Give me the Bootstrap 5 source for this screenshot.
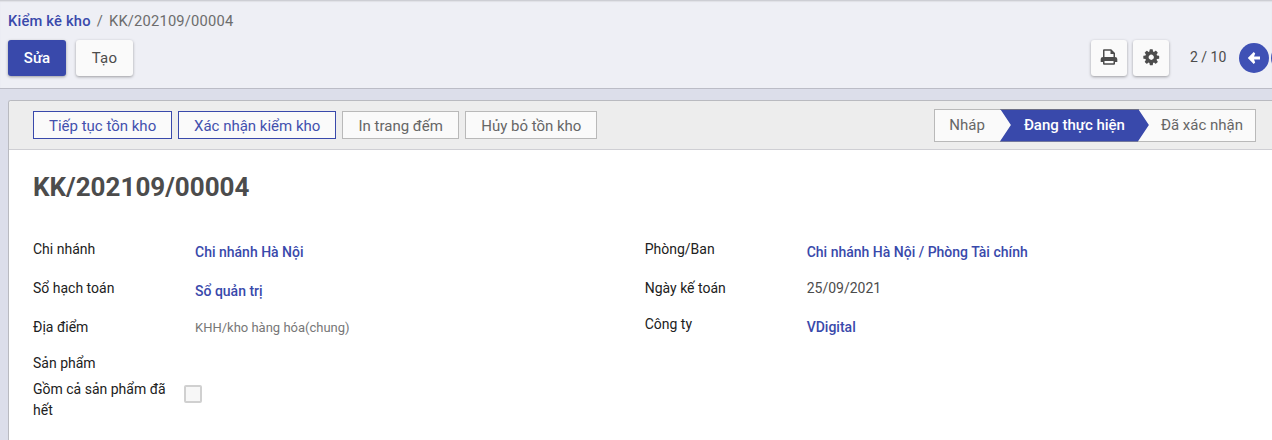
<!DOCTYPE html>
<html lang="vi">
<head>
<meta charset="utf-8">
<meta name="viewport" content="width=device-width, initial-scale=1">
<title>Kiểm kê kho</title>
<link href="https://cdn.jsdelivr.net/npm/bootstrap@5.3.0/dist/css/bootstrap.min.css" rel="stylesheet">
<style>
body{font-family:Roboto,"Noto Sans",sans-serif;font-size:14px;line-height:21px;color:#4c4c4c;background:#dcdeea;height:440px;overflow:hidden}
a{color:#3949ab;text-decoration:none;font-weight:500}
svg{display:block;fill:currentColor}
.topbar{height:89px;background:#eeeff5;border-top:1px solid #cdced4;border-bottom:1px solid #bbbcc6;padding:10px 0 0 8px;box-shadow:inset 0 1px 1px #dfe0e6}
.crumbs{font-size:14.7px;line-height:21px;letter-spacing:.2px;color:#6c6c6c}
.crumbs .sep{padding:0 6px}
.btn-act{--bs-btn-border-width:0;--bs-btn-border-radius:3px;height:36px;padding:0;font-size:15px;line-height:36px;color:#4c4c4c;background:#fafafa;box-shadow:0 1px 3px rgba(0,0,0,.35)}
.btn-act.main{background:#3949ab;color:#fff;font-weight:500;width:58px;letter-spacing:0}
.btn-text{width:57px;letter-spacing:.2px}
.btn-new{margin-left:10px}
.btn-sq{width:36px;padding-bottom:2px}
.gap-tool{gap:6px}
.pager{font-size:14px;letter-spacing:0;width:37px;white-space:nowrap;margin:0 6px 1px 15px}
.round{flex:none;width:30px;height:30px;border-radius:50%;background:#3f51b5;color:#fff}
.round.next{margin:0 -29px 0 -4px}
.sheet{margin:11px 0 0 8px;height:341px;border:1px solid #b9bac0;border-right:0;border-bottom:0;border-radius:3px 0 0 0;background:#fff;overflow:hidden}
.statusrow{height:49px;background:#ededed;border-bottom:1px solid #cfcfd4;padding:0 16px 0 24px}
.btn-flat{--bs-btn-border-radius:0;height:28px;padding:1px 15px 0;font-size:15px;line-height:27px;color:#666;background:#fafafa;border-color:#b9b9b9}
.btn-flat.blue{color:#4250ae;border-color:#3949ab}
.btn-flat.wide{width:158px;padding-left:14px;padding-right:14px}
.btn-flat.count{width:117px}
.steps{height:33px;background:#fafafa;border:1px solid #b9b9b9;font-size:15px;line-height:30px;color:#666}
.step-side{padding:0 15px 0 14.500px}
.step-last{padding:0 12px}
.step-now{height:33px;width:149px;text-align:center;margin:-1px 0;line-height:33px;background:#3949ab;color:#fff;font-weight:500;font-size:15px;border:1px solid #6d6f86;border-width:1px 0;line-height:31px;letter-spacing:-.02px;clip-path:polygon(0 0,calc(100% - 11px) 0,100% 50%,calc(100% - 11px) 100%,0 100%,11px 50%)}
.doc-title{font-size:26px;line-height:32px;font-weight:700;color:#4c4c4c;margin:21px 0 0 24px}
.fields{margin:36px 0 0 24px}
.fcol{width:611.7px}
.lbl{width:162px;color:#212121;padding-right:26px}
.dim{font-size:13px;color:#777}
.r39{height:39px}.r36{height:36px}.r26{height:26px}
.low{padding-top:3px}
.tick{width:18px;height:18px;margin:6px 0 0 -11px;border:2px solid #d0d0d0;border-radius:2px;background:#f7f7f7}
</style>
</head>
<body>
<header class="topbar">
  <nav class="crumbs d-flex"><a href="#">Kiểm kê kho</a><span class="sep">/</span><span>KK/202109/00004</span></nav>
  <div class="d-flex align-items-center mt-2">
    <button class="btn btn-act main">Sửa</button>
    <button class="btn btn-act btn-text btn-new">Tạo</button>
    <div class="d-flex align-items-center ms-auto gap-tool">
      <button class="btn btn-act btn-sq d-flex align-items-center justify-content-center" aria-label="In"><svg width="18" height="16" viewBox="0 0 18 16"><path fill-rule="evenodd" d="M3 8V1.300Q3 .3 4 .3h7.200L15 4v4q2.300 0 2.300 2v3H15v1.800q0 .9-1 .9H4q-1 0-1-.9V13H.7v-3Q.7 8 3 8zm1.500 0h9V5h-3V1.800h-6zm0 4v2.200h9V12z"/></svg></button>
      <button class="btn btn-act btn-sq d-flex align-items-center justify-content-center" aria-label="Tác vụ"><svg width="18.500" height="18.500" viewBox="0 0 1792 1792"><path d="M1152 896q0-106-75-181t-181-75-181 75-75 181 75 181 181 75 181-75 75-181zm512-109v222q0 12-8 23t-20 13l-185 28q-19 54-39 91 35 50 107 138 10 12 10 25t-9 23q-27 37-99 108t-94 71q-12 0-26-9l-138-108q-44 23-91 38-16 136-29 186-7 28-36 28h-222q-14 0-24.500-8.500t-11.500-21.500l-28-184q-49-16-90-37l-141 107q-10 9-25 9-14 0-25-11-126-114-165-168-7-10-7-23 0-12 8-23 15-21 51-66.500t54-70.500q-27-50-41-99l-183-27q-13-2-21-12.500t-8-23.500v-222q0-12 8-23t19-13l186-28q14-46 39-92-40-57-107-138-10-12-10-24 0-10 9-23 26-36 98.500-107.500t94.500-71.500q13 0 26 10l138 107q44-23 91-38 16-136 29-186 7-28 36-28h222q14 0 24.500 8.500t11.500 21.500l28 184q49 16 90 37l142-107q9-9 24-9 13 0 25 10 129 119 165 170 7 8 7 22 0 12-8 23-15 21-51 66.500t-54 70.500q26 50 41 98l183 28q13 2 21 12.500t8 23.500z"/></svg></button>
      <span class="pager">2 / 10</span>
      <span class="round d-flex align-items-center justify-content-center"><svg width="14" height="14" viewBox="0 0 14 14"><path d="M6.700 1l1.500 1.400-1.200 3.200h6v2.800h-6l1.200 3.200L6.700 13 .8 7z"/></svg></span>
      <span class="round next"></span>
    </div>
  </div>
</header>
<main class="sheet">
  <div class="statusrow d-flex align-items-center">
    <div class="d-flex gap-tool">
      <button class="btn btn-flat blue">Tiếp tục tồn kho</button>
      <button class="btn btn-flat blue wide">Xác nhận kiểm kho</button>
      <button class="btn btn-flat count">In trang đếm</button>
      <button class="btn btn-flat">Hủy bỏ tồn kho</button>
    </div>
    <div class="steps d-flex ms-auto">
      <span class="step-side">Nháp</span>
      <span class="step-now">Đang thực hiện</span>
      <span class="step-last">Đã xác nhận</span>
    </div>
  </div>
  <h1 class="doc-title">KK/202109/00004</h1>
  <div class="fields d-flex">
    <div class="fcol">
      <div class="d-flex r39"><div class="lbl">Chi nhánh</div><div class="low"><a href="#">Chi nhánh Hà Nội</a></div></div>
      <div class="d-flex r39"><div class="lbl">Sổ hạch toán</div><div class="low"><a href="#">Sổ quản trị</a></div></div>
      <div class="d-flex r36"><div class="lbl">Địa điểm</div><div class="dim">KHH/kho hàng hóa(chung)</div></div>
      <div class="d-flex r26"><div class="lbl">Sản phẩm</div></div>
      <div class="d-flex"><div class="lbl">Gồm cả sản phẩm đã hết</div><div class="tick"></div></div>
    </div>
    <div>
      <div class="d-flex r39"><div class="lbl">Phòng/Ban</div><div class="low"><a href="#">Chi nhánh Hà Nội / Phòng Tài chính</a></div></div>
      <div class="d-flex r36"><div class="lbl">Ngày kế toán</div><div>25/09/2021</div></div>
      <div class="d-flex r39"><div class="lbl">Công ty</div><div class="low"><a href="#">VDigital</a></div></div>
    </div>
  </div>
</main>
<script src="https://cdn.jsdelivr.net/npm/bootstrap@5.3.0/dist/js/bootstrap.bundle.min.js"></script>
</body>
</html>
